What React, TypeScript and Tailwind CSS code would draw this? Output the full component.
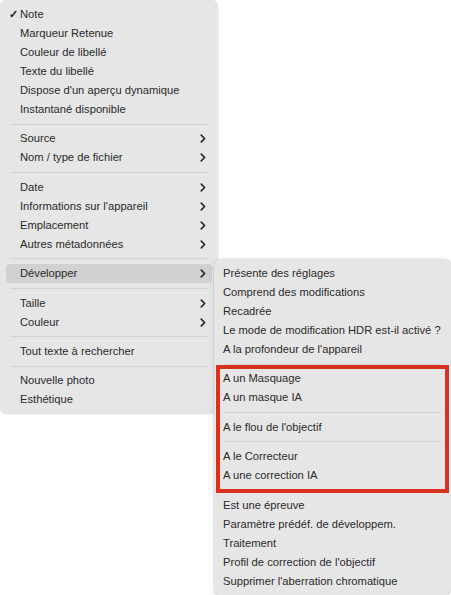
import React from 'react';

type Item = { label: string; sub?: boolean; checked?: boolean; active?: boolean } | 'sep';

const mainItems: Item[] = [
  { label: 'Note', checked: true },
  { label: 'Marqueur Retenue' },
  { label: 'Couleur de libellé' },
  { label: 'Texte du libellé' },
  { label: "Dispose d'un aperçu dynamique" },
  { label: 'Instantané disponible' },
  'sep',
  { label: 'Source', sub: true },
  { label: 'Nom / type de fichier', sub: true },
  'sep',
  { label: 'Date', sub: true },
  { label: "Informations sur l'appareil", sub: true },
  { label: 'Emplacement', sub: true },
  { label: 'Autres métadonnées', sub: true },
  'sep',
  { label: 'Développer', sub: true, active: true },
  'sep',
  { label: 'Taille', sub: true },
  { label: 'Couleur', sub: true },
  'sep',
  { label: 'Tout texte à rechercher' },
  'sep',
  { label: 'Nouvelle photo' },
  { label: 'Esthétique' },
];

const subItems: Item[] = [
  { label: 'Présente des réglages' },
  { label: 'Comprend des modifications' },
  { label: 'Recadrée' },
  { label: 'Le mode de modification HDR est-il activé ?' },
  { label: "A la profondeur de l'appareil" },
  'sep',
  { label: 'A un Masquage' },
  { label: 'A un masque IA' },
  'sep',
  { label: "A le flou de l'objectif" },
  'sep',
  { label: 'A le Correcteur' },
  { label: 'A une correction IA' },
  'sep',
  { label: 'Est une épreuve' },
  { label: 'Paramètre prédéf. de développem.' },
  { label: 'Traitement' },
  { label: "Profil de correction de l'objectif" },
  { label: "Supprimer l'aberration chromatique" },
];

const Chevron = () => (
  <svg width="6" height="9" viewBox="0 0 6 9" className="shrink-0">
    <path d="M1.3 1.2 L4.6 4.5 L1.3 7.8" fill="none" stroke="#2b2b2b" strokeWidth="1.7" strokeLinecap="round" strokeLinejoin="round" />
  </svg>
);

const MenuList = ({ items, rowClass }: { items: Item[]; rowClass: string }) => (
  <div className="flex flex-col">
    {items.map((it, i) =>
      it === 'sep' ? (
        <div key={i} className="flex h-[10.4px] items-center px-[10px]">
          <div className="h-px w-full bg-[#d3d3d3]" />
        </div>
      ) : (
        <div
          key={i}
          className={`relative flex h-[19px] items-center rounded-[4px] ${rowClass} ${it.active ? 'bg-[#d1d1d1]' : ''}`}
        >
          {it.checked && <span className="absolute left-[3px] text-[11px] font-bold text-[#222]">✓</span>}
          <span className="flex-1 whitespace-nowrap">{it.label}</span>
          {it.sub && <Chevron />}
        </div>
      )
    )}
  </div>
);

export default function App() {
  return (
    <div
      className="relative h-[595px] w-[451px] overflow-hidden bg-white text-[11.2px] text-[#2a2a2a]"
      style={{ fontFamily: '"Liberation Sans", Arial, sans-serif' }}
    >
      <div className="w-[218px] rounded-[7px] bg-[#e6e6e6] py-[5px] shadow-[0_0_0_0.5px_rgba(0,0,0,0.12)]">
        <MenuList items={mainItems} rowClass="mx-[6px] pl-[14px] pr-[6px]" />
      </div>

      <div className="absolute left-[214px] top-[259px] w-[237px] rounded-[7px] bg-[#e6e6e6] py-[5px] shadow-[0_0_0_0.5px_rgba(0,0,0,0.12),0_2px_8px_rgba(0,0,0,0.08)]">
        <MenuList items={subItems} rowClass="mx-[3px] pl-[6px] pr-[6px]" />
      </div>

      <div className="absolute left-[216px] top-[365px] h-[128px] w-[233px] border-[4px] border-[#d8321f]" />
    </div>
  );
}
